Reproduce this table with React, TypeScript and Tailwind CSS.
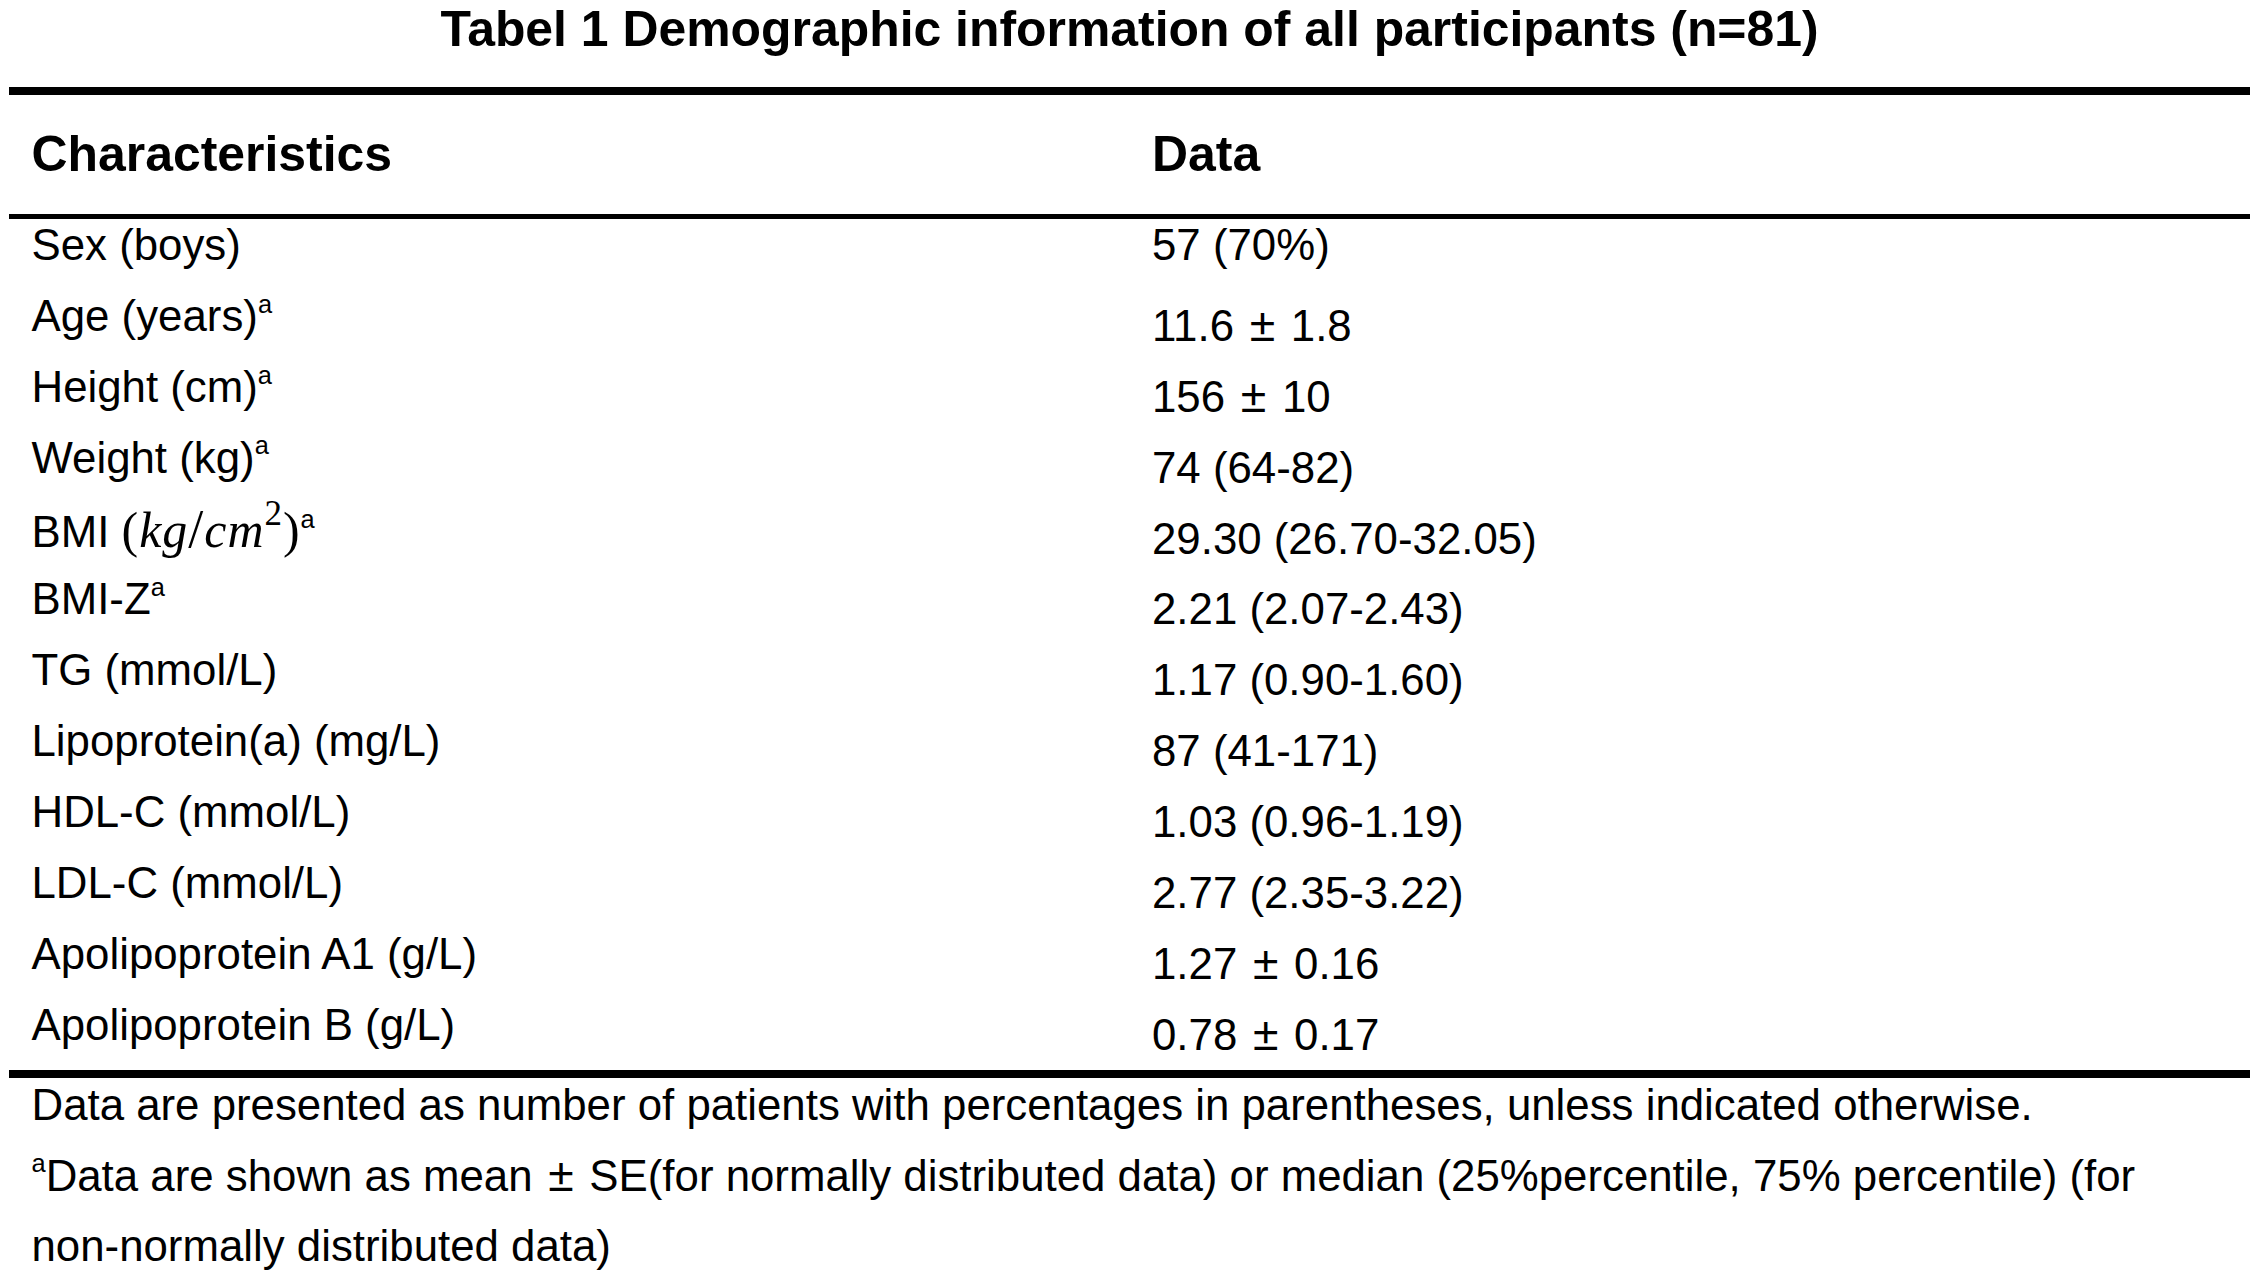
import React from "react";

function Sup({ children }: { children: React.ReactNode }) {
  return <span className="relative top-[-0.72em] text-[0.58em] leading-none">{children}</span>;
}

function PM() {
  return <span className="inline-block mx-[3.5px] text-[1.06em] leading-none font-light">±</span>;
}

function BmiUnit() {
  return (
    <span className="font-['Liberation_Serif','Times_New_Roman',serif] text-[1.14em] leading-none tracking-[0.02em]">
      <span>(</span>
      <span className="italic">kg</span>
      <span className="text-[1.08em]">/</span>
      <span className="italic">cm</span>
      <span className="relative top-[-0.62em] text-[0.7em] leading-none">2</span>
      <span>)</span>
    </span>
  );
}

type Row = { label: React.ReactNode; value: React.ReactNode; first?: boolean };

const rows: Row[] = [
  { label: <>Sex (boys)</>, value: <>57 (70%)</>, first: true },
  { label: <>Age (years)<Sup>a</Sup></>, value: <>11.6 <PM /> 1.8</> },
  { label: <>Height (cm)<Sup>a</Sup></>, value: <>156 <PM /> 10</> },
  { label: <>Weight (kg)<Sup>a</Sup></>, value: <>74 (64-82)</> },
  { label: <>BMI <BmiUnit /><Sup>a</Sup></>, value: <>29.30 (26.70-32.05)</> },
  { label: <>BMI-Z<Sup>a</Sup></>, value: <>2.21 (2.07-2.43)</> },
  { label: <>TG (mmol/L)</>, value: <>1.17 (0.90-1.60)</> },
  { label: <>Lipoprotein(a) (mg/L)</>, value: <>87 (41-171)</> },
  { label: <>HDL-C (mmol/L)</>, value: <>1.03 (0.96-1.19)</> },
  { label: <>LDL-C (mmol/L)</>, value: <>2.77 (2.35-3.22)</> },
  { label: <>Apolipoprotein A1 (g/L)</>, value: <>1.27 <PM /> 0.16</> },
  { label: <>Apolipoprotein B (g/L)</>, value: <>0.78 <PM /> 0.17</> },
];

export default function App() {
  return (
    <div className="w-[2259px] h-[1285px] bg-white text-black font-['Liberation_Sans','Arial',sans-serif] overflow-hidden">
      <h1 className="h-[60px] flex items-center justify-center text-[49.9px] font-bold leading-none whitespace-nowrap">
        Tabel 1 Demographic information of all participants (n=81)
      </h1>
      <div className="mx-[9px] mt-[27px]">
        <div className="h-[8px] bg-black" />
        <div className="grid grid-cols-[1143px_1fr] h-[119px] items-center text-[49.9px] font-bold leading-none">
          <div className="pl-[22.5px]">Characteristics</div>
          <div>Data</div>
        </div>
        <div className="h-[5px] bg-black" />
        <div className="text-[43.8px]">
          {rows.map((r, i) => (
            <div key={i} className="grid grid-cols-[1143px_1fr] h-[70.9px] whitespace-nowrap">
              <div className="pl-[22.5px] leading-[52px]">{r.label}</div>
              <div className={r.first ? "leading-[52px]" : "leading-[52px] pt-[10px]"}>{r.value}</div>
            </div>
          ))}
        </div>
        <div className="h-[8px] bg-black" />
        <div className="pl-[22.5px] text-[43.8px] whitespace-nowrap">
          <p className="leading-[54px]">
            Data are presented as number of patients with percentages in parentheses, unless indicated otherwise.
          </p>
          <p className="mt-[9px] leading-[70px]">
            <Sup>a</Sup>Data are shown as mean <PM /> SE(for normally distributed data) or median (25%percentile, 75% percentile) (for
            <br />
            non-normally distributed data)
          </p>
        </div>
      </div>
    </div>
  );
}
